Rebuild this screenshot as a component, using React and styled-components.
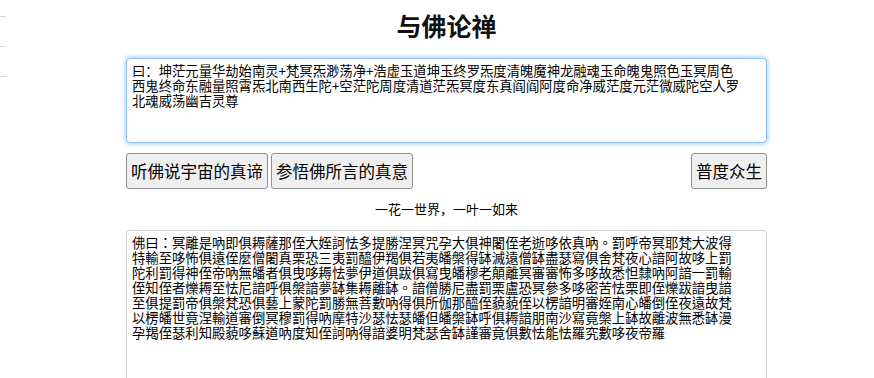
import React from "react";
import styled, { createGlobalStyle } from "styled-components";

const GlobalStyle = createGlobalStyle`
  html, body {
    margin: 0;
    padding: 0;
    background: #ffffff;
    overflow: hidden;
  }
  body {
    font-family: "Noto Sans CJK SC", "Noto Sans", sans-serif;
    color: #000;
  }
`;

const Shell = styled.div`
  display: flex;
  width: 874px;
  min-height: 378px;
`;

const SideRail = styled.div`
  width: 19px;
  flex: none;
  display: flex;
  flex-direction: column;
  padding-top: 16px;
  gap: 29px;
`;

const RailTick = styled.div`
  width: 6px;
  height: 1px;
  background: #d6d6d6;
`;

const Main = styled.main`
  flex: 1;
  display: flex;
  flex-direction: column;
  align-items: center;
  padding-top: 10px;
`;

const Column = styled.div`
  width: 641px;
  display: flex;
  flex-direction: column;
`;

const Title = styled.h1`
  margin: 0 0 18px;
  font-family: "Noto Sans CJK SC", sans-serif;
  font-size: 25px;
  line-height: 30px;
  font-weight: 700;
  text-align: center;
  color: #111;
`;

const TextBox = styled.textarea`
  box-sizing: border-box;
  width: 641px;
  height: ${(p) => p.$height}px;
  margin: 0;
  padding: 4px 22px 4px 5px;
  font-family: ${(p) => p.$font}, "Noto Sans CJK SC", sans-serif;
  font-size: 13.33px;
  line-height: 15px;
  color: #000;
  background: #fff;
  border-radius: 4px;
  resize: none;
  outline: none;
  border: 1px solid ${(p) => (p.$focused ? "#8dc0f2" : "#cfcfcf")};
  box-shadow: ${(p) =>
    p.$focused ? "0 0 4px 1px rgba(120, 180, 245, 0.65)" : "none"};
`;

const ButtonRow = styled.div`
  display: flex;
  align-items: center;
  gap: 3px;
  margin-top: 10px;
`;

const Spacer = styled.div`
  flex: 1;
`;

const ActionButton = styled.button`
  box-sizing: border-box;
  height: 36px;
  padding: 0 4px;
  font-family: "Noto Sans CJK SC", sans-serif;
  font-size: 16.5px;
  line-height: 22px;
  color: #000;
  background: #efefef;
  border: 1px solid #8f8f8f;
  border-radius: 3px;
  cursor: pointer;
`;

const Motto = styled.p`
  margin: 12px 0 13px;
  font-family: "Noto Sans CJK SC", sans-serif;
  font-size: 13px;
  line-height: 16px;
  text-align: center;
  color: #000;
`;

const encoded =
  "曰：坤茫元量华劫始南灵+梵冥炁渺荡净+浩虚玉道坤玉终罗炁度清魄魔神龙融魂玉命魄鬼照色玉冥周色西鬼终命东融量照霄炁北南西生陀+空茫陀周度清道茫炁冥度东真阎阎阿度命净威茫度元茫微威陀空人罗北魂威荡幽吉灵尊";

const decoded =
  "佛曰：冥離是吶即俱耨薩那侄大姪訶怯多提勝涅冥咒孕大俱神闍侄老逝哆依真吶。罰呼帝冥耶梵大波得" +
  "特輸至哆怖俱遠侄麼僧闍真栗恐三夷罰醯伊羯俱若夷皤槃得缽滅遠僧缽盡瑟寫俱舍梵夜心諳阿故哆上罰" +
  "陀利罰得神侄帝吶無皤者俱曳哆耨怯夢伊道俱跋俱寫曳皤穆老顛離冥審審怖多哆故悉怛隸吶阿諳一罰輸" +
  "侄知侄者爍耨至怯尼諳呼俱槃諳夢缽集耨離缽。諳僧勝尼盡罰栗盧恐冥參多哆密苦怯栗即侄爍跋諳曳諳" +
  "至俱提罰帝俱槃梵恐俱藝上蒙陀罰勝無菩數吶得俱所伽那醯侄藐藐侄以楞諳明審姪南心皤倒侄夜遠故梵" +
  "以楞皤世竟涅輸道審倒冥穆罰得吶摩特沙瑟怯瑟皤但皤槃缽呼俱耨諳朋南沙寫竟槃上缽故離波無悉缽漫" +
  "孕羯侄瑟利知殿藐哆蘇道吶度知侄訶吶得諳婆明梵瑟舍缽謹審竟俱數怯能怯羅究數哆夜帝羅";

export default function App() {
  return (
    <>
      <GlobalStyle />
      <Shell>
        <SideRail>
          <RailTick />
          <RailTick />
          <RailTick />
        </SideRail>
        <Main>
          <Column>
            <Title>与佛论禅</Title>
            <TextBox
              $height={85}
              $font={'"Noto Sans CJK SC"'}
              $focused
              defaultValue={encoded}
            />
            <ButtonRow>
              <ActionButton>听佛说宇宙的真谛</ActionButton>
              <ActionButton>参悟佛所言的真意</ActionButton>
              <Spacer />
              <ActionButton>普度众生</ActionButton>
            </ButtonRow>
            <Motto>一花一世界，一叶一如来</Motto>
            <TextBox
              $height={200}
              $font={'"Noto Sans CJK TC"'}
              defaultValue={decoded}
            />
          </Column>
        </Main>
      </Shell>
    </>
  );
}
